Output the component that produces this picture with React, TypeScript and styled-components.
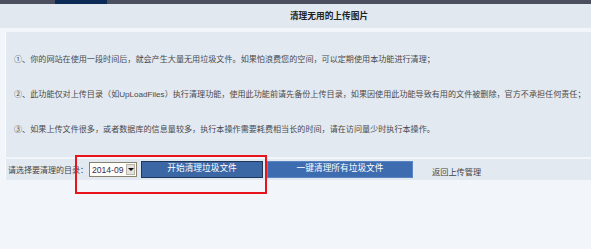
import React from "react";
import styled, { createGlobalStyle } from "styled-components";

const GlobalStyle = createGlobalStyle`
  html, body {
    margin: 0;
    background: #f2f5fa;
    font-family: "Liberation Sans", "Noto Sans CJK SC", sans-serif;
    color: #444;
  }
  * { box-sizing: border-box; }
`;

const notes = [
  "①、你的网站在使用一段时间后，就会产生大量无用垃圾文件。如果怕浪费您的空间，可以定期使用本功能进行清理；",
  "②、此功能仅对上传目录（如UpLoadFiles）执行清理功能，使用此功能前请先备份上传目录，如果因使用此功能导致有用的文件被删除，官方不承担任何责任；",
  "③、如果上传文件很多，或者数据库的信息量较多，执行本操作需要耗费相当长的时间，请在访问量少时执行本操作。",
];

const Page = styled.div`
  width: 591px;
  height: 249px;
  overflow: hidden;
`;

const TopBar = styled.div`
  height: 4px;
  background: #4b4f5f;
  display: flex;
`;

const Tab = styled.div`
  margin-left: 55px;
  width: 52px;
  background: #0b2b56;
`;

const TitleBar = styled.div`
  height: 24px;
  background: #e1e8f0;
  padding-left: 67px;
  text-align: center;
  font-size: 8.7px;
  font-weight: bold;
  line-height: 24px;
  color: #222;
`;

const Main = styled.div`
  margin-top: 4px;
  padding-left: 5px;
`;

const Panel = styled.div`
  height: 125px;
  background: #e3e9f1;
  border-left: 1px solid #f8fafc;
  padding: 21px 0 0 8px;
  display: flex;
  flex-direction: column;
  gap: 21px;
`;

const Note = styled.p`
  margin: 0;
  font-size: 8.1px;
  line-height: 14px;
  white-space: nowrap;
  color: #4a4a4a;
`;

const FormRow = styled.div`
  position: relative;
  margin-top: 2px;
  height: 21px;
  background: #e3e9f1;
  border-left: 1px solid #f8fafc;
  padding-left: 2px;
  display: flex;
  align-items: center;
  font-size: 8px;
  color: #444;
`;

const Label = styled.span`
  width: 81px;
  white-space: nowrap;
`;

const Select = styled.div`
  width: 48px;
  height: 15px;
  background: #fffef8;
  border: 1px solid #8a8270;
  display: flex;
  align-items: center;
  justify-content: space-between;
  padding: 0 1px 0 2px;
`;

const SelectValue = styled.span`
  font-family: "Liberation Sans", sans-serif;
  font-size: 8.6px;
  white-space: nowrap;
  color: #3a2d5c;
`;

const Arrow = styled.span`
  flex: none;
  width: 9px;
  height: 11px;
  background: #e4e2dc;
  border: 1px solid #b8b4a8;
  display: flex;
  align-items: center;
  justify-content: center;
  &::after {
    content: "";
    border-left: 3px solid transparent;
    border-right: 3px solid transparent;
    border-top: 3px solid #111;
  }
`;

const Button = styled.button<{ $width: number; $framed?: boolean }>`
  margin-left: 4px;
  width: ${(p) => p.$width}px;
  height: 17px;
  padding: 0 0 3px;
  background: ${(p) => (p.$framed ? "#3b67a5" : "#3e6cb0")};
  border: 1px solid ${(p) => (p.$framed ? "#1e3659" : "#5a85c2")};
  color: #fff;
  font-family: "Liberation Sans", "Noto Sans CJK SC", sans-serif;
  font-size: 8.7px;
  line-height: 12px;
  cursor: pointer;
`;

const BackLink = styled.a`
  margin: 3px 0 0 19px;
  color: #444;
  text-decoration: none;
  font-size: 8.2px;
`;

const Highlight = styled.div`
  position: absolute;
  left: 69px;
  top: -4px;
  width: 192px;
  height: 39px;
  border: 2px solid #e8141b;
  pointer-events: none;
`;

export default function App() {
  return (
    <Page>
      <GlobalStyle />
      <TopBar>
        <Tab />
      </TopBar>
      <TitleBar>清理无用的上传图片</TitleBar>
      <Main>
        <Panel>
          {notes.map((n) => (
            <Note key={n}>{n}</Note>
          ))}
        </Panel>
        <FormRow>
          <Label>请选择要清理的目录：</Label>
          <Select>
            <SelectValue>2014-09</SelectValue>
            <Arrow />
          </Select>
          <Button $width={122} $framed>
            开始清理垃圾文件
          </Button>
          <Button $width={146}>一键清理所有垃圾文件</Button>
          <BackLink href="#">返回上传管理</BackLink>
          <Highlight />
        </FormRow>
      </Main>
    </Page>
  );
}
